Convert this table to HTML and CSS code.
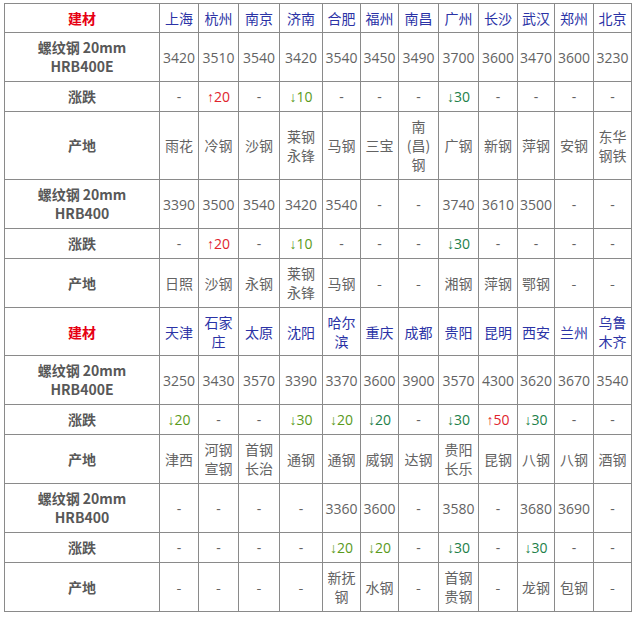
FILE: index.html
```html
<!DOCTYPE html>
<html lang="zh">
<head>
<meta charset="utf-8">
<title>螺纹钢价格</title>
<link rel="stylesheet" href="styles.css">
</head>
<body>
<table class="price">
  <colgroup>
    <col class="c0"><col class="c39"><col class="c40"><col class="c41"><col class="c43"><col class="c38"><col class="c38"><col class="c40"><col class="c40"><col class="c39"><col class="c37"><col class="c39"><col class="c38">
  </colgroup>
  <tbody>
    <tr class="head">
      <td class="lab red">建材</td>
      <td class="city">上海</td><td class="city">杭州</td><td class="city">南京</td><td class="city">济南</td><td class="city">合肥</td><td class="city">福州</td><td class="city">南昌</td><td class="city">广州</td><td class="city">长沙</td><td class="city">武汉</td><td class="city">郑州</td><td class="city">北京</td>
    </tr>
    <tr class="num">
      <td class="lab">螺纹钢 20mm<br>HRB400E</td>
      <td>3420</td><td>3510</td><td>3540</td><td>3420</td><td>3540</td><td>3450</td><td>3490</td><td>3700</td><td>3600</td><td>3470</td><td>3600</td><td>3230</td>
    </tr>
    <tr class="num">
      <td class="lab">涨跌</td>
      <td>-</td><td class="up"><span class="ar">↑</span>20</td><td>-</td><td class="dn"><span class="ar">↓</span>10</td><td>-</td><td>-</td><td>-</td><td class="dn2"><span class="ar">↓</span>30</td><td>-</td><td>-</td><td>-</td><td>-</td>
    </tr>
    <tr>
      <td class="lab">产地</td>
      <td>雨花</td><td>冷钢</td><td>沙钢</td><td>莱钢<br>永锋</td><td>马钢</td><td>三宝</td><td>南<br>(昌)<br>钢</td><td>广钢</td><td>新钢</td><td>萍钢</td><td>安钢</td><td>东华<br>钢铁</td>
    </tr>
    <tr class="num">
      <td class="lab">螺纹钢 20mm<br>HRB400</td>
      <td>3390</td><td>3500</td><td>3540</td><td>3420</td><td>3540</td><td>-</td><td>-</td><td>3740</td><td>3610</td><td>3500</td><td>-</td><td>-</td>
    </tr>
    <tr class="num">
      <td class="lab">涨跌</td>
      <td>-</td><td class="up"><span class="ar">↑</span>20</td><td>-</td><td class="dn"><span class="ar">↓</span>10</td><td>-</td><td>-</td><td>-</td><td class="dn2"><span class="ar">↓</span>30</td><td>-</td><td>-</td><td>-</td><td>-</td>
    </tr>
    <tr>
      <td class="lab">产地</td>
      <td>日照</td><td>沙钢</td><td>永钢</td><td>莱钢<br>永锋</td><td>马钢</td><td>-</td><td>-</td><td>湘钢</td><td>萍钢</td><td>鄂钢</td><td>-</td><td>-</td>
    </tr>
    <tr class="head">
      <td class="lab red">建材</td>
      <td class="city">天津</td><td class="city">石家<br>庄</td><td class="city">太原</td><td class="city">沈阳</td><td class="city">哈尔<br>滨</td><td class="city">重庆</td><td class="city">成都</td><td class="city">贵阳</td><td class="city">昆明</td><td class="city">西安</td><td class="city">兰州</td><td class="city">乌鲁<br>木齐</td>
    </tr>
    <tr class="num">
      <td class="lab">螺纹钢 20mm<br>HRB400E</td>
      <td>3250</td><td>3430</td><td>3570</td><td>3390</td><td>3370</td><td>3600</td><td>3900</td><td>3570</td><td>4300</td><td>3620</td><td>3670</td><td>3540</td>
    </tr>
    <tr class="num">
      <td class="lab">涨跌</td>
      <td class="dn"><span class="ar">↓</span>20</td><td>-</td><td>-</td><td class="dn"><span class="ar">↓</span>30</td><td class="dn"><span class="ar">↓</span>20</td><td class="dn2"><span class="ar">↓</span>20</td><td>-</td><td class="dn2"><span class="ar">↓</span>30</td><td class="up"><span class="ar">↑</span>50</td><td class="dn2"><span class="ar">↓</span>30</td><td>-</td><td>-</td>
    </tr>
    <tr>
      <td class="lab">产地</td>
      <td>津西</td><td>河钢<br>宣钢</td><td>首钢<br>长治</td><td>通钢</td><td>通钢</td><td>威钢</td><td>达钢</td><td>贵阳<br>长乐</td><td>昆钢</td><td>八钢</td><td>八钢</td><td>酒钢</td>
    </tr>
    <tr class="num">
      <td class="lab">螺纹钢 20mm<br>HRB400</td>
      <td>-</td><td>-</td><td>-</td><td>-</td><td>3360</td><td>3600</td><td>-</td><td>3580</td><td>-</td><td>3680</td><td>3690</td><td>-</td>
    </tr>
    <tr class="num">
      <td class="lab">涨跌</td>
      <td>-</td><td>-</td><td>-</td><td>-</td><td class="dn"><span class="ar">↓</span>20</td><td class="dn"><span class="ar">↓</span>20</td><td>-</td><td class="dn2"><span class="ar">↓</span>30</td><td>-</td><td class="dn2"><span class="ar">↓</span>30</td><td>-</td><td>-</td>
    </tr>
    <tr>
      <td class="lab">产地</td>
      <td>-</td><td>-</td><td>-</td><td>-</td><td>新抚<br>钢</td><td>水钢</td><td>-</td><td>首钢<br>贵钢</td><td>-</td><td>龙钢</td><td>包钢</td><td>-</td>
    </tr>
  </tbody>
</table>
</body>
</html>
```
FILE: styles.css
```css
html, body {
  margin: 0;
  padding: 0;
  background: #ffffff;
}

body {
  padding: 3px 0 0 4px;
  font-family: "Noto Sans CJK SC", sans-serif;
  font-size: 14px;
  color: #636363;
}

.price {
  border-collapse: collapse;
  table-layout: fixed;
  width: 628px;
}

.c0 { width: 155px; }
.c37 { width: 37px; }
.c38 { width: 38px; }
.c39 { width: 39px; }
.c40 { width: 40px; }
.c41 { width: 41px; }
.c43 { width: 43px; }

.price td {
  border: 1px solid #8a8a8a;
  padding: 5px 0;
  line-height: 19px;
  text-align: center;
  vertical-align: middle;
  white-space: nowrap;
  overflow: visible;
}

.price .head td {
  padding: 5px 0 4px;
}

.price .num td {
  font-family: "Open Sans", sans-serif;
}

.price td.lab {
  font-family: "Noto Sans CJK SC", sans-serif;
  font-weight: bold;
  color: #585858;
}

.price td.red {
  color: #e60012;
}

.price td.city {
  color: #2b33a6;
}

.price td.up {
  color: #e0242c;
}

.price td.dn {
  color: #5a9a1c;
}

.price td.dn2 {
  color: #22804a;
}

.ar {
  font-family: "Liberation Sans", sans-serif;
  line-height: 14px;
}
```
